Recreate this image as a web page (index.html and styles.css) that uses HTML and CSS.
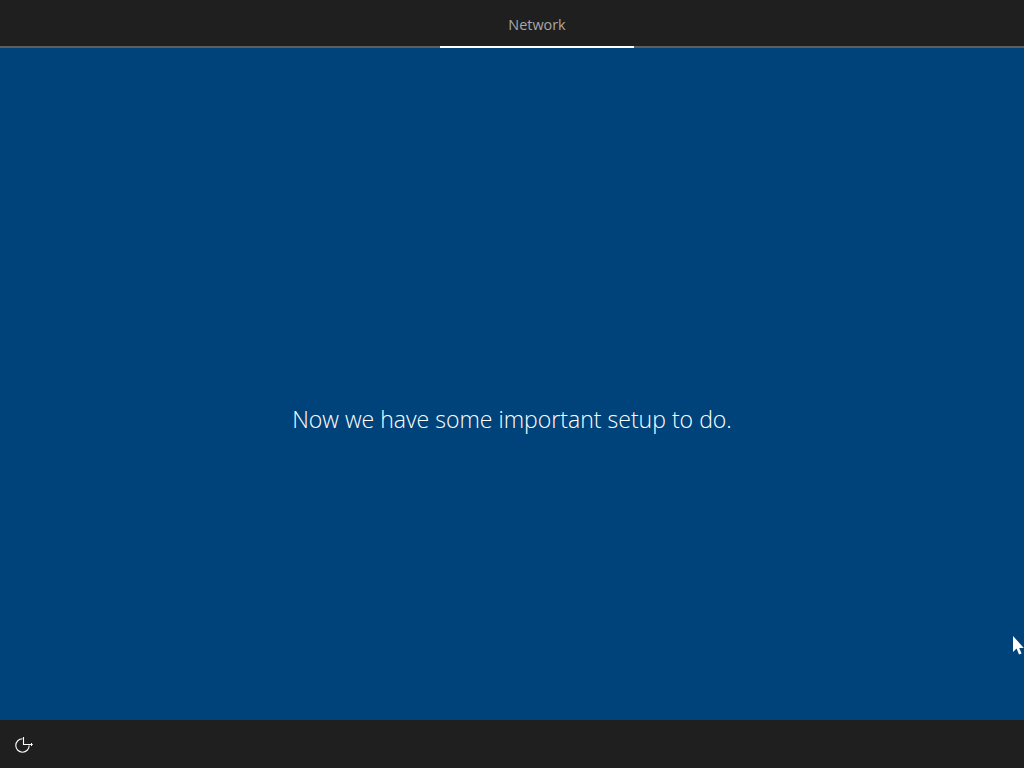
FILE: index.html
```html
<!DOCTYPE html>
<html lang="en">
<head>
<meta charset="utf-8">
<title>Network</title>
<link rel="stylesheet" href="styles.css">
</head>
<body>
<div class="screen">
  <header class="topbar">
    <div class="tab">Network</div>
  </header>
  <main class="content">
    <p class="message">Now we have some important setup to do.</p>
    <svg class="cursor" width="12" height="20" viewBox="0 0 12 20"><path d="M1 0v16l3.6-3.4L7 18.5l2.6-1.1-2.4-5.4h4.6z" fill="#fff"/></svg>
  </main>
  <footer class="bottombar">
    <svg class="ease" width="19" height="18" viewBox="0 0 19 18" fill="none" stroke="#fff" stroke-width="1.1"><path d="M14.2 9.5A6.7 6.7 0 1 1 7.5 2.8"/><path d="M8.5 1v7.5h8.5"/><path d="M16 7l1.5 1.5L16 10" stroke-width="1"/></svg>
  </footer>
</div>
</body>
</html>
```

FILE: styles.css
```css
html, body {
  margin: 0;
  height: 100%;
  background: #00437b;
}
.screen {
  width: 1024px;
  height: 768px;
  display: flex;
  flex-direction: column;
  overflow: hidden;
  font-family: "Open Sans", "Noto Sans", sans-serif;
}
.topbar {
  height: 46px;
  flex: none;
  display: flex;
  padding-left: 440px;
  background: #1f1f1f;
  border-bottom: 2px solid #5d5d5d;
}
.tab {
  width: 194px;
  height: 44px;
  padding-top: 2px;
  border-bottom: 2px solid #fff;
  display: flex;
  align-items: center;
  justify-content: center;
  font-size: 14.4px;
  color: #a8a8a8;
}
.content {
  flex: 1;
  position: relative;
  display: flex;
  justify-content: center;
  padding-top: 354px;
  box-sizing: border-box;
  background: #00437b;
}
.message {
  margin: 0;
  font-size: 23.05px;
  font-weight: 350;
  line-height: 34px;
  color: #fff;
}
.cursor {
  position: absolute;
  left: 1012px;
  top: 588px;
}
.bottombar {
  height: 48px;
  flex: none;
  box-sizing: border-box;
  display: flex;
  align-items: center;
  padding: 2px 0 0 15px;
  background: #1f1f1f;
}
.ease {
  display: block;
}
```
